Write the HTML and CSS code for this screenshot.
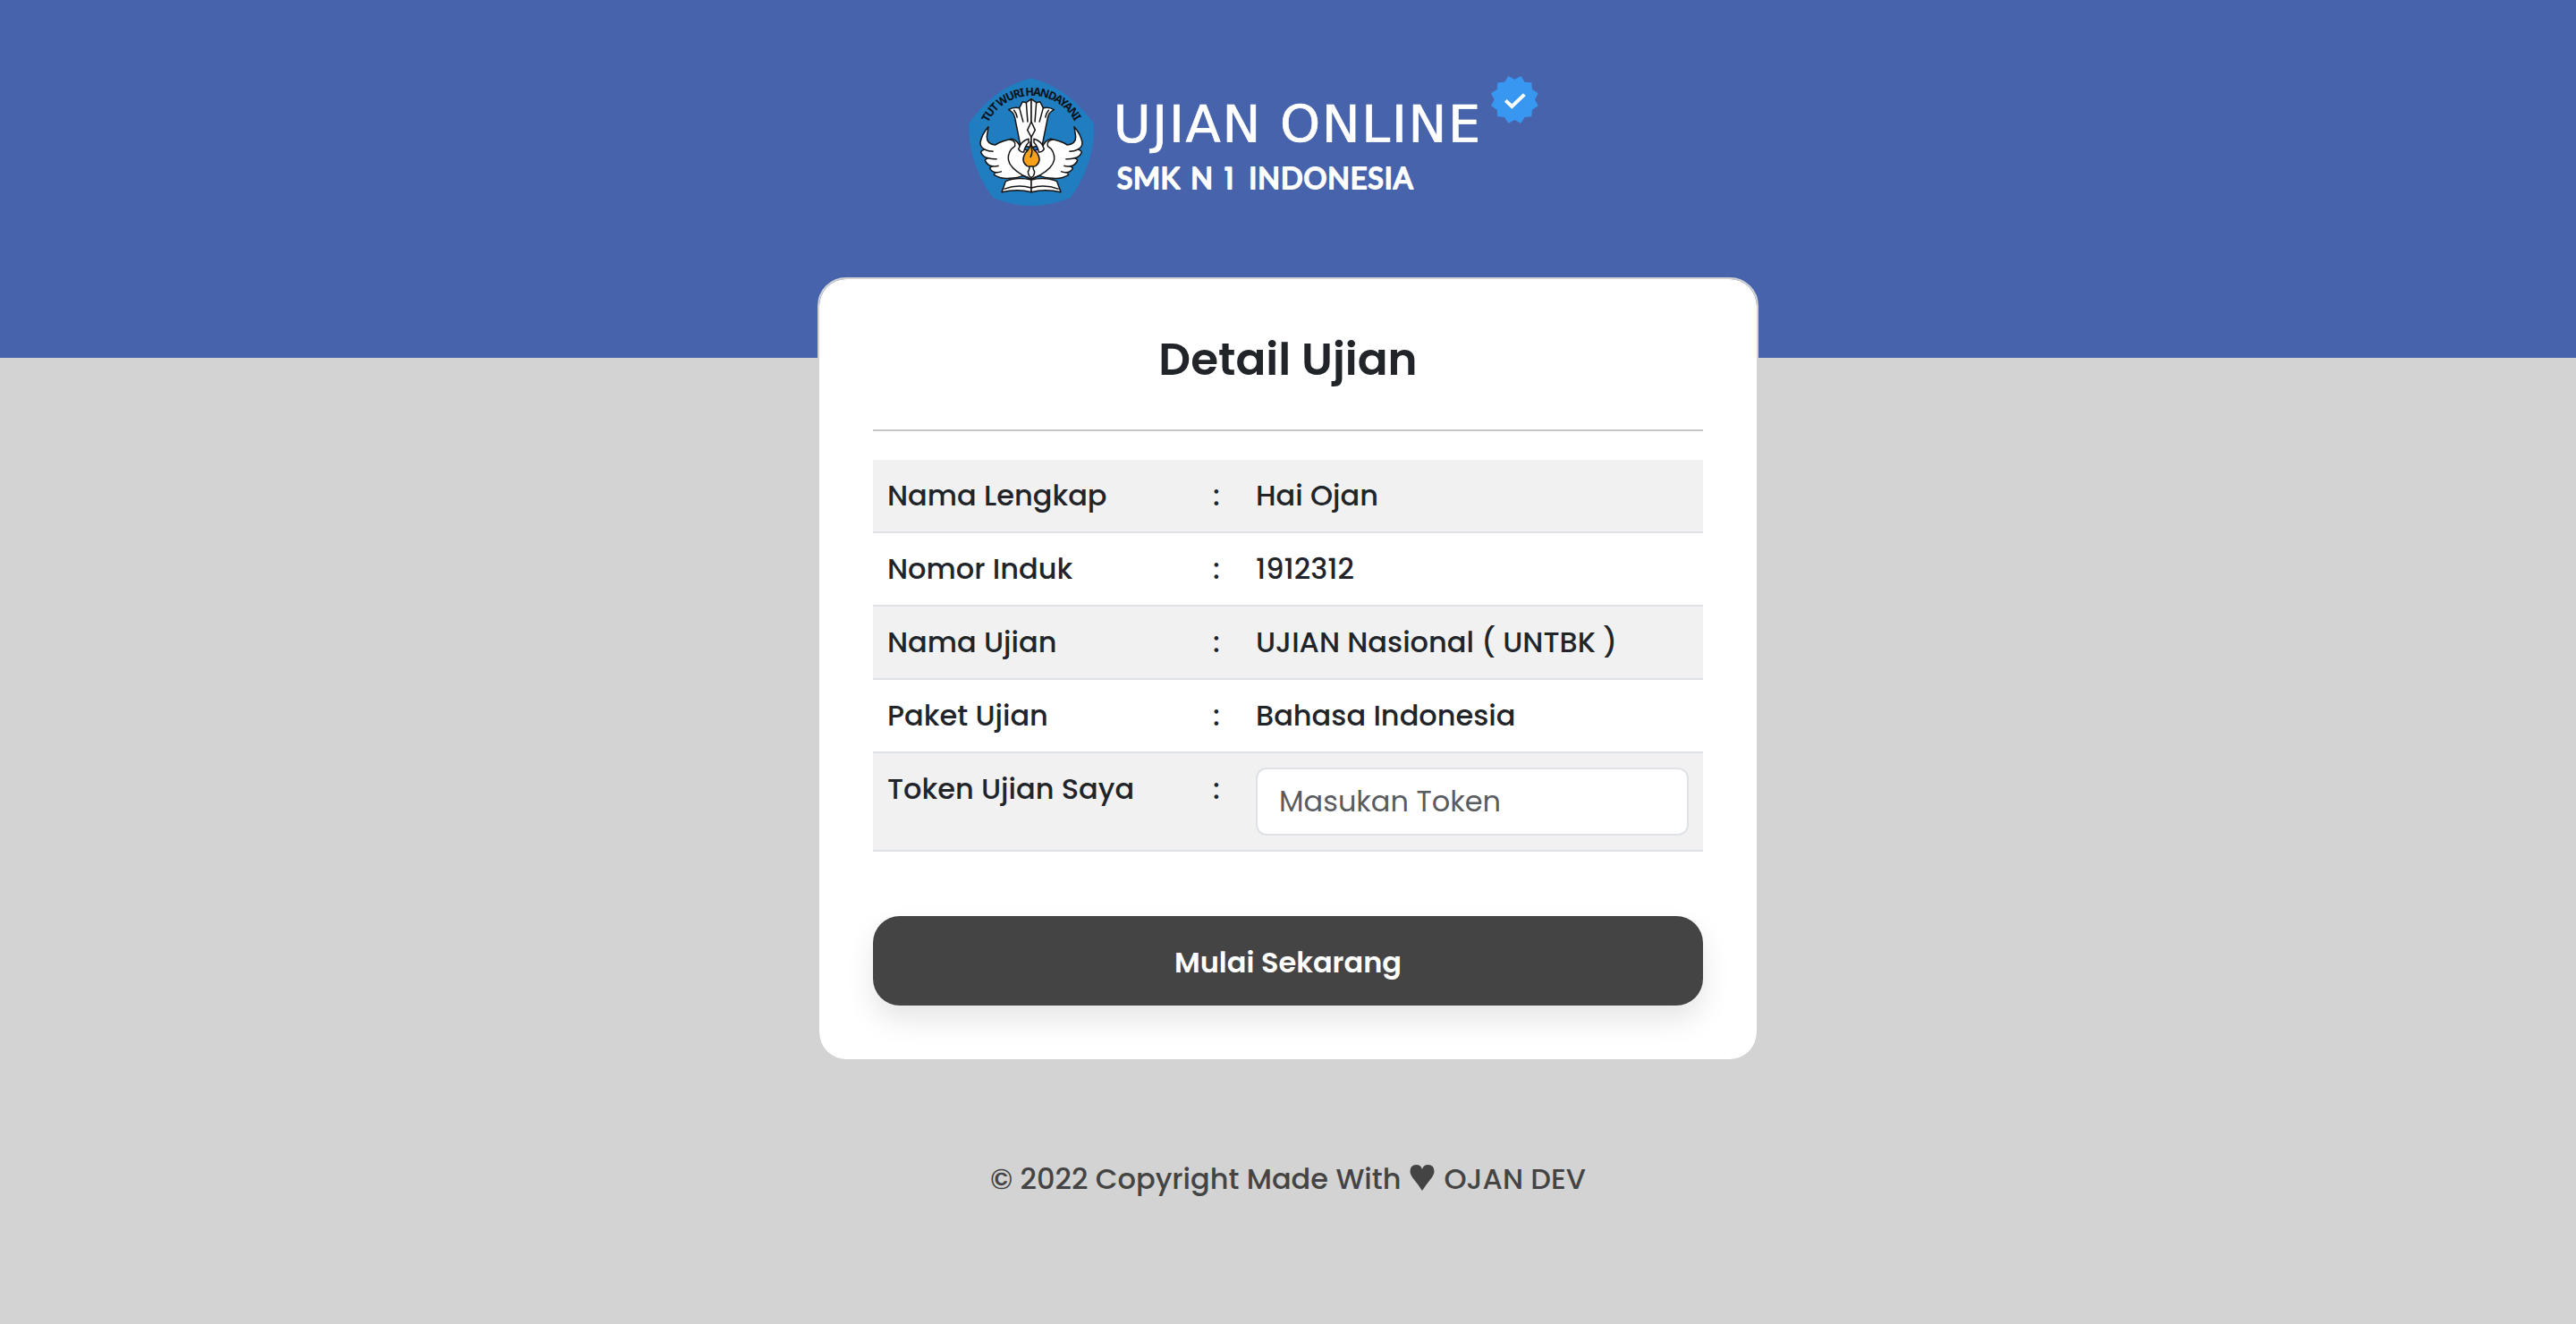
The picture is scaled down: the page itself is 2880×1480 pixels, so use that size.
FILE: index.html
```html
<!DOCTYPE html>
<html lang="id">
<head>
<meta charset="utf-8">
<title>Detail Ujian</title>
<link rel="stylesheet" href="styles.css">
</head>
<body>
<header class="banner">
  <svg class="logo" viewBox="0 0 2010 510" role="img" aria-label="Ujian Online">
    <defs>
      <path id="arc" d="M104 202A163 163 0 0 1 400 209"/>
      <g id="half">
        <path d="M249 122L232 134L220 131L209 152Q190 147 173 158Q190 166 194 185L212 275L249 285Z"/>
        <path class="line" d="M209 152L222 200M232 134L237 200M190 158Q200 170 202 185"/>
        <path d="M105 215Q83 240 78 268Q78 284 92 291Q82 294 80 300Q86 318 105 320Q95 322 94 328Q102 346 119 347Q110 350 110 355Q118 368 132 368Q124 371 124 376Q145 390 175 388Q205 386 222 379L249 392V300L212 285Q205 262 184 256Q150 262 128 276Q99 272 100 248Z"/>
        <path class="line" d="M92 291Q105 298 122 298M105 320Q118 324 134 323M119 347Q128 349 140 346M132 368Q140 369 150 365M176 258Q199 262 194 280Q170 295 172 325Q176 352 222 379Q238 384 249 392"/>
        <path d="M240 256Q215 262 206 290Q214 302 224 300Q228 280 240 268Z"/>
        <path d="M249 393Q200 382 163 398L150 434Q203 422 249 434Z"/>
        <path class="line" d="M249 420Q205 406 157 424"/>
      </g>
    </defs>
    <path fill="#207dc0" d="M249 52Q125 82 39 204Q38 345 121 453Q249 507 380 453Q460 345 460 206Q370 82 249 52Z"/>
    <text class="motto"><textPath href="#arc" textLength="358">TUT WURI HANDAYANI</textPath></text>
    <g class="bird">
      <use href="#half"/>
      <use href="#half" transform="translate(498 0) scale(-1 1)"/>
      <path d="M249 198L236 226L249 250L262 226Z"/>
      <path fill="#f7a11b" d="M246 266Q248 286 230 302Q212 330 234 346Q249 354 264 346Q286 330 268 302Q252 290 246 266Z"/>
      <path class="line" d="M246 276Q257 296 246 318"/>
      <path d="M243 348H255Q254 356 260 366Q258 384 249 385Q240 384 238 366Q244 356 243 348Z"/>
    </g>
    <text class="brand" x="524" y="266" textLength="1232">UJIAN ONLINE</text>
    <text class="school" y="422"><tspan x="536" textLength="211">SMK</tspan> <tspan x="784">N</tspan> <tspan class="one" x="897">1</tspan> <tspan x="979" textLength="550">INDONESIA</tspan></text>
    <g transform="translate(1870 124)">
      <path fill="#3897f0" d="M0-68L21-79L34-59L57-57L59-34L79-21L68 0L79 21L59 34L57 57L34 59L21 79L0 68L-21 79L-34 59L-57 57L-59 34L-79 21L-68 0L-79-21L-59-34L-57-57L-34-59L-21-79Z"/>
      <path fill="none" stroke="#fff" stroke-width="12" d="M-30 3L-9 23L33-17"/>
    </g>
  </svg>
</header>
<main class="card">
  <h1 class="title">Detail Ujian</h1>
  <table class="details">
    <tr><td class="label">Nama Lengkap</td><td class="colon">:</td><td>Hai Ojan</td></tr>
    <tr><td class="label">Nomor Induk</td><td class="colon">:</td><td>1912312</td></tr>
    <tr><td class="label">Nama Ujian</td><td class="colon">:</td><td>UJIAN Nasional ( UNTBK )</td></tr>
    <tr><td class="label">Paket Ujian</td><td class="colon">:</td><td>Bahasa Indonesia</td></tr>
    <tr><td class="label">Token Ujian Saya</td><td class="colon">:</td><td class="field"><input class="token" type="text" placeholder="Masukan Token"></td></tr>
  </table>
  <button class="start">Mulai Sekarang</button>
</main>
<footer class="footer">
  <span>© 2022 Copyright Made With</span>
  <svg class="heart" viewBox="0 0 27 29"><path fill="#444" d="M13.500 29Q9 22 4 16Q0 11 0 7.500Q0 0 7 0Q12 0 13.500 5Q15 0 20 0Q27 0 27 7.500Q27 11 23 16Q18 22 13.500 29Z"/></svg>
  <span>OJAN DEV</span>
</footer>
</body>
</html>
```
FILE: styles.css
```css
* { box-sizing: border-box; }
body {
  margin: 0;
  min-height: 1480px;
  background: #d3d3d3;
  color: #212529;
  font: 500 32px/48px Poppins, Inter, sans-serif;
}
.banner {
  display: flex;
  justify-content: center;
  height: 400px;
  padding: 70px 70px 0 0;
  background: #4663ac;
}
.logo { width: 670px; height: 170px; }
.logo text { fill: #fff; }
.logo .motto { font: 700 38px "Noto Sans", sans-serif; fill: #0b1118; }
.brand { font: 400 172px "DejaVu Sans", sans-serif; stroke: #fff; stroke-width: 2; }
.logo .school { font: 400 97px Lato, sans-serif; stroke: #fff; stroke-width: 6; stroke-linejoin: round; }
.one { font-family: Poppins, Inter, sans-serif; }
.bird { fill: #fff; stroke: #151515; stroke-width: 4.5; stroke-linejoin: round; }
.line { fill: none; }
.card {
  width: 1052px;
  height: 876px;
  margin: -90px auto 0;
  padding: 60px 60px 0;
  background: #fff;
  background-clip: padding-box;
  border: 2px solid #d3d3d3;
  border-radius: 32px;
}
.title {
  margin: 0 0 32px;
  padding-bottom: 48px;
  border-bottom: 2px solid #c8c8c9;
  font-size: 50px;
  font-weight: 600;
  line-height: 60px;
  text-align: center;
}
.details { width: 100%; border-collapse: separate; border-spacing: 0; table-layout: fixed; }
.details td { height: 82px; padding: 16px; border-bottom: 2px solid #dee2e6; vertical-align: top; }
.details tr:nth-child(odd) { background: #f1f1f1; }
.details .label { width: 364px; }
.details .colon { width: 48px; }
.token {
  display: block;
  width: 100%;
  height: 76px;
  padding: 0 24px;
  border: 2px solid #dee2e6;
  border-radius: 12px;
  background: #fff;
  font: 400 32px/48px Poppins, Inter, sans-serif;
}
.token::placeholder { color: #595c5f; opacity: 1; }
.start {
  display: block;
  width: 100%;
  height: 100px;
  margin-top: 72px;
  padding: 4px 0 0;
  border: 0;
  border-radius: 30px;
  background: #444;
  box-shadow: 0 16px 32px rgba(0, 0, 0, .1);
  color: #fff;
  font: 600 32px/48px Poppins, Inter, sans-serif;
}
.footer {
  display: flex;
  justify-content: center;
  align-items: center;
  gap: 10px;
  margin-top: 108px;
  color: #444;
}
.heart { width: 28px; height: 29px; margin-top: -3px; }
```
